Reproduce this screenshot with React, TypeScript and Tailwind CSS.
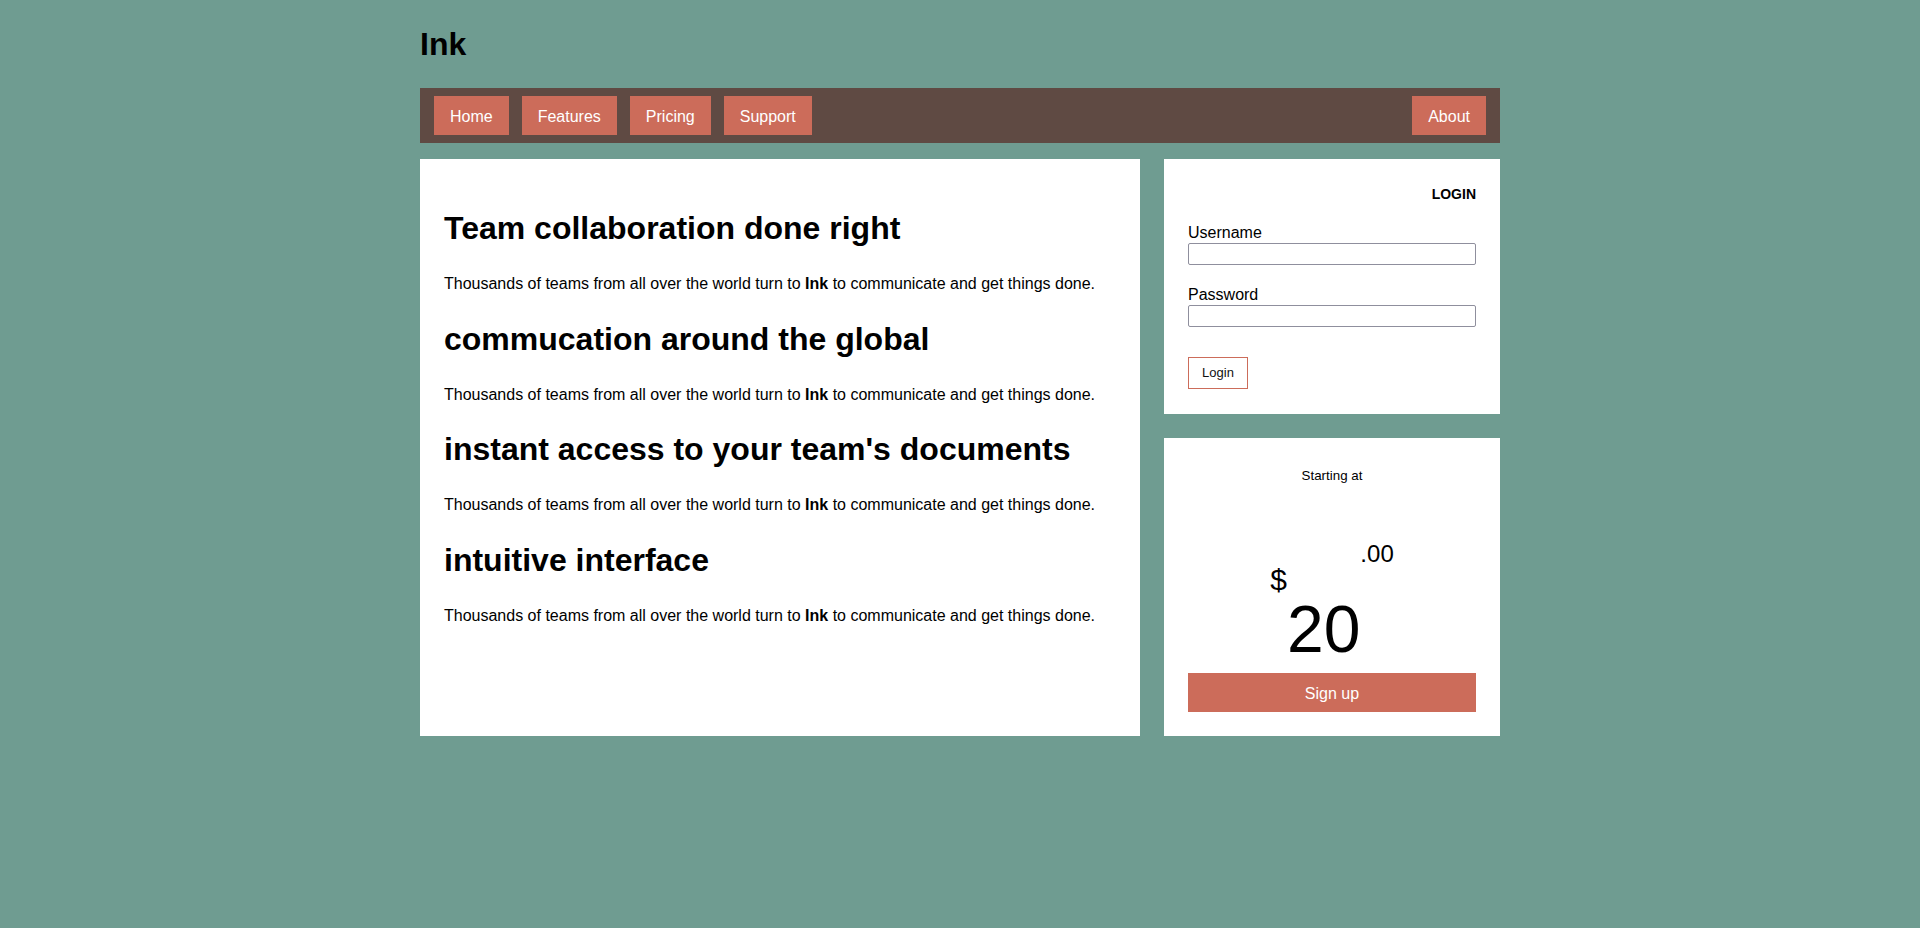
import React from "react";

const navItems = ["Home", "Features", "Pricing", "Support"];

const sections = [
  "Team collaboration done right",
  "commucation around the global",
  "instant access to your team's documents",
  "intuitive interface",
];

const App = () => {
  return (
    <div className="min-h-screen bg-[#6f9c91] font-['Liberation_Sans',Arial,sans-serif] text-black">
      <div className="mx-auto w-[1080px] pt-[25px]">
        <h1 className="text-[32px] font-bold leading-[38px]">Ink</h1>

        <nav className="mt-[25px] flex h-[55px] items-center bg-[#5f4a43] px-[14px]">
          <div className="flex gap-[13px]">
            {navItems.map((item) => (
              <a key={item} href="#" className="flex h-[39px] items-center bg-[#cc6c5a] px-4 pt-[2px] text-base text-white">
                {item}
              </a>
            ))}
          </div>
          <a href="#" className="ml-auto flex h-[39px] items-center bg-[#cc6c5a] px-4 pt-[2px] text-base text-white">
            About
          </a>
        </nav>

        <div className="mt-4 grid grid-cols-[720px_336px] gap-6">
          <main className="bg-white p-6">
            {sections.map((title, i) => (
              <section key={title} className={i === 0 ? "" : "mt-[27.5px]"}>
                <h2 className="mt-[27px] text-[32px] font-bold leading-[37px]">{title}</h2>
                <p className="mt-[28px] text-base leading-[18px]">
                  Thousands of teams from all over the world turn to <b>Ink</b> to communicate and get things done.
                </p>
              </section>
            ))}
          </main>

          <aside className="flex flex-col gap-6">
            <div className="bg-white px-6 pt-[25px] pb-[25px]">
              <h3 className="text-right text-sm font-bold leading-5">LOGIN</h3>
              <label className="mt-5 block text-base leading-[18px]">Username</label>
              <input type="text" className="mt-px block h-[22px] w-full rounded-[2px] border border-[#8f8f9d] px-1 text-sm" />
              <label className="mt-[21px] block text-base leading-[18px]">Password</label>
              <input type="password" className="mt-px block h-[22px] w-full rounded-[2px] border border-[#8f8f9d] px-1 text-sm" />
              <button className="mt-[30px] h-8 w-[60px] border border-[#cc6c5a] bg-white text-[13px] text-[#111]">
                Login
              </button>
            </div>

            <div className="bg-white p-6">
              <p className="mt-[2px] text-center text-[13.33px] leading-6">Starting at</p>
              <div className="mt-[54px] flex items-start justify-center">
                <span className="mt-[23px] text-[30px] leading-none">$</span>
                <span className="mt-[54px] text-[66px] leading-none">20</span>
                <span className="text-[24px] leading-none">.00</span>
              </div>
              <button className="mt-[11px] h-[39px] w-full bg-[#cc6c5a] pt-[2px] text-base text-white">Sign up</button>
            </div>
          </aside>
        </div>
      </div>
    </div>
  );
};

export default App;
